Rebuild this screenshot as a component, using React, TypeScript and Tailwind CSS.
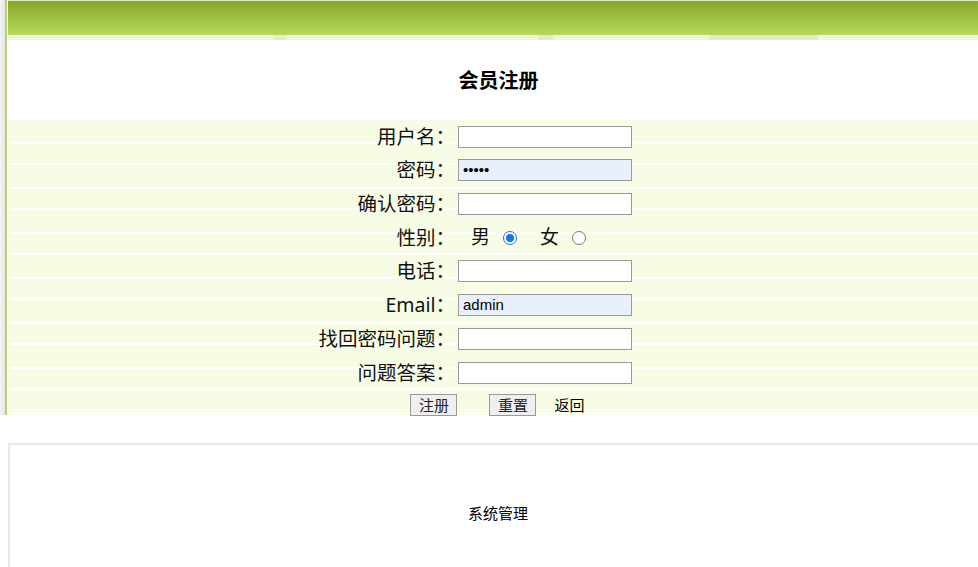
import React from 'react'

const FONT = '"Noto Sans", "Noto Sans CJK SC", sans-serif'

const rows: { label: string; value?: string; type?: string; autofill?: boolean; h: string }[] = [
  { label: '用户名：', h: 'h-[33px]' },
  { label: '密码：', value: '•••••', autofill: true, h: 'h-[34px]' },
  { label: '确认密码：', h: 'h-[34px]' },
  { label: '性别：', type: 'radio', h: 'h-[33px]' },
  { label: '电话：', h: 'h-[34px]' },
  { label: 'Email：', value: 'admin', autofill: true, h: 'h-[34px]' },
  { label: '找回密码问题：', h: 'h-[34px]' },
  { label: '问题答案：', h: 'h-[34px]' },
]

function Field({ value, autofill }: { value?: string; autofill?: boolean }) {
  return (
    <div
      className={`w-[174px] h-[22px] border border-[#999] px-[4px] flex items-center text-[15px] text-black ${
        autofill ? 'bg-[#e8f0fe]' : 'bg-white'
      }`}
      style={{ fontFamily: '"Liberation Sans", Arial, sans-serif' }}
    >
      {value}
    </div>
  )
}

function Radio({ checked }: { checked?: boolean }) {
  return (
    <span
      className={`inline-flex items-center justify-center w-[14px] h-[14px] rounded-full border bg-white ${
        checked ? 'border-[#1a73e8]' : 'border-[#767676]'
      }`}
    >
      {checked && <span className="w-[8px] h-[8px] rounded-full bg-[#1a73e8]" />}
    </span>
  )
}

export default function App() {
  return (
    <div className="w-[978px] h-[567px] overflow-hidden bg-white" style={{ fontFamily: FONT }}>
      <div className="flex w-[990px]">
        {/* left gutter */}
        <div className="w-[5px] h-[415px] bg-gradient-to-r from-[#f4f4f4] to-[#e4e4e4]" />
        <div className="w-[2px] h-[415px] bg-[#b8cf73]" />
        <div className="flex-1 flex flex-col">
          {/* header bar */}
          <div className="h-[1px] bg-[#dfe8c8]" />
          <div className="flex h-[34px]">
            <div className="w-[1px] bg-white" />
            <div className="flex-1 bg-gradient-to-b from-[#88a827] to-[#b3d957]" />
          </div>
          <div className="flex h-[5px] bg-[#eef6dd]">
            <div className="w-[266px]" />
            <div className="w-[14px] bg-[#e2edc4]" />
            <div className="w-[251px]" />
            <div className="w-[15px] bg-[#e2edc4]" />
            <div className="w-[156px]" />
            <div className="w-[109px] bg-[#e2edc4]" />
          </div>

          {/* title */}
          <div className="h-[80px] flex items-center justify-center">
            <h1 className="text-[20px] font-bold text-black pt-[2px]">会员注册</h1>
          </div>

          {/* form */}
          <div className="h-[295px] bg-[repeating-linear-gradient(to_bottom,#f7fde5_0px,#f7fde5_22px,#ffffff_22px,#ffffff_24px,#f7fde5_24px,#f7fde5_43px,#ffffff_43px,#ffffff_45px)]">
            {rows.map((r) => (
              <div key={r.label} className={`${r.h} flex items-center`}>
                <div className="w-[448px] text-right text-[19.5px] text-[#111] leading-none">{r.label}</div>
                <div className="pl-[3px]">
                  {r.type === 'radio' ? (
                    <div className="flex items-center text-[19px] text-[#111] leading-none pl-[13px]">
                      <span>男</span>
                      <span className="ml-[13px] flex"><Radio checked /></span>
                      <span className="ml-[23px]">女</span>
                      <span className="ml-[13px] flex"><Radio /></span>
                    </div>
                  ) : (
                    <Field value={r.value} autofill={r.autofill} />
                  )}
                </div>
              </div>
            ))}
            <div className="h-[26px] flex items-end justify-center text-[15px] pr-[2px]">
              <button className="w-[47px] h-[22px] bg-[#efefef] border border-[#999] text-[#222] leading-none">注册</button>
              <button className="ml-[32px] w-[47px] h-[22px] bg-[#efefef] border border-[#999] text-[#222] leading-none">重置</button>
              <span className="ml-[18px] h-[22px] flex items-center text-black">返回</span>
            </div>
          </div>
        </div>
      </div>

      {/* footer */}
      <div className="mt-[28px] ml-[8px] w-[978px] h-[130px] border-t-2 border-l-2 border-[#e8e8e8] flex justify-center pt-[57px]">
        <span className="text-[15px] text-black">系统管理</span>
      </div>
    </div>
  )
}
